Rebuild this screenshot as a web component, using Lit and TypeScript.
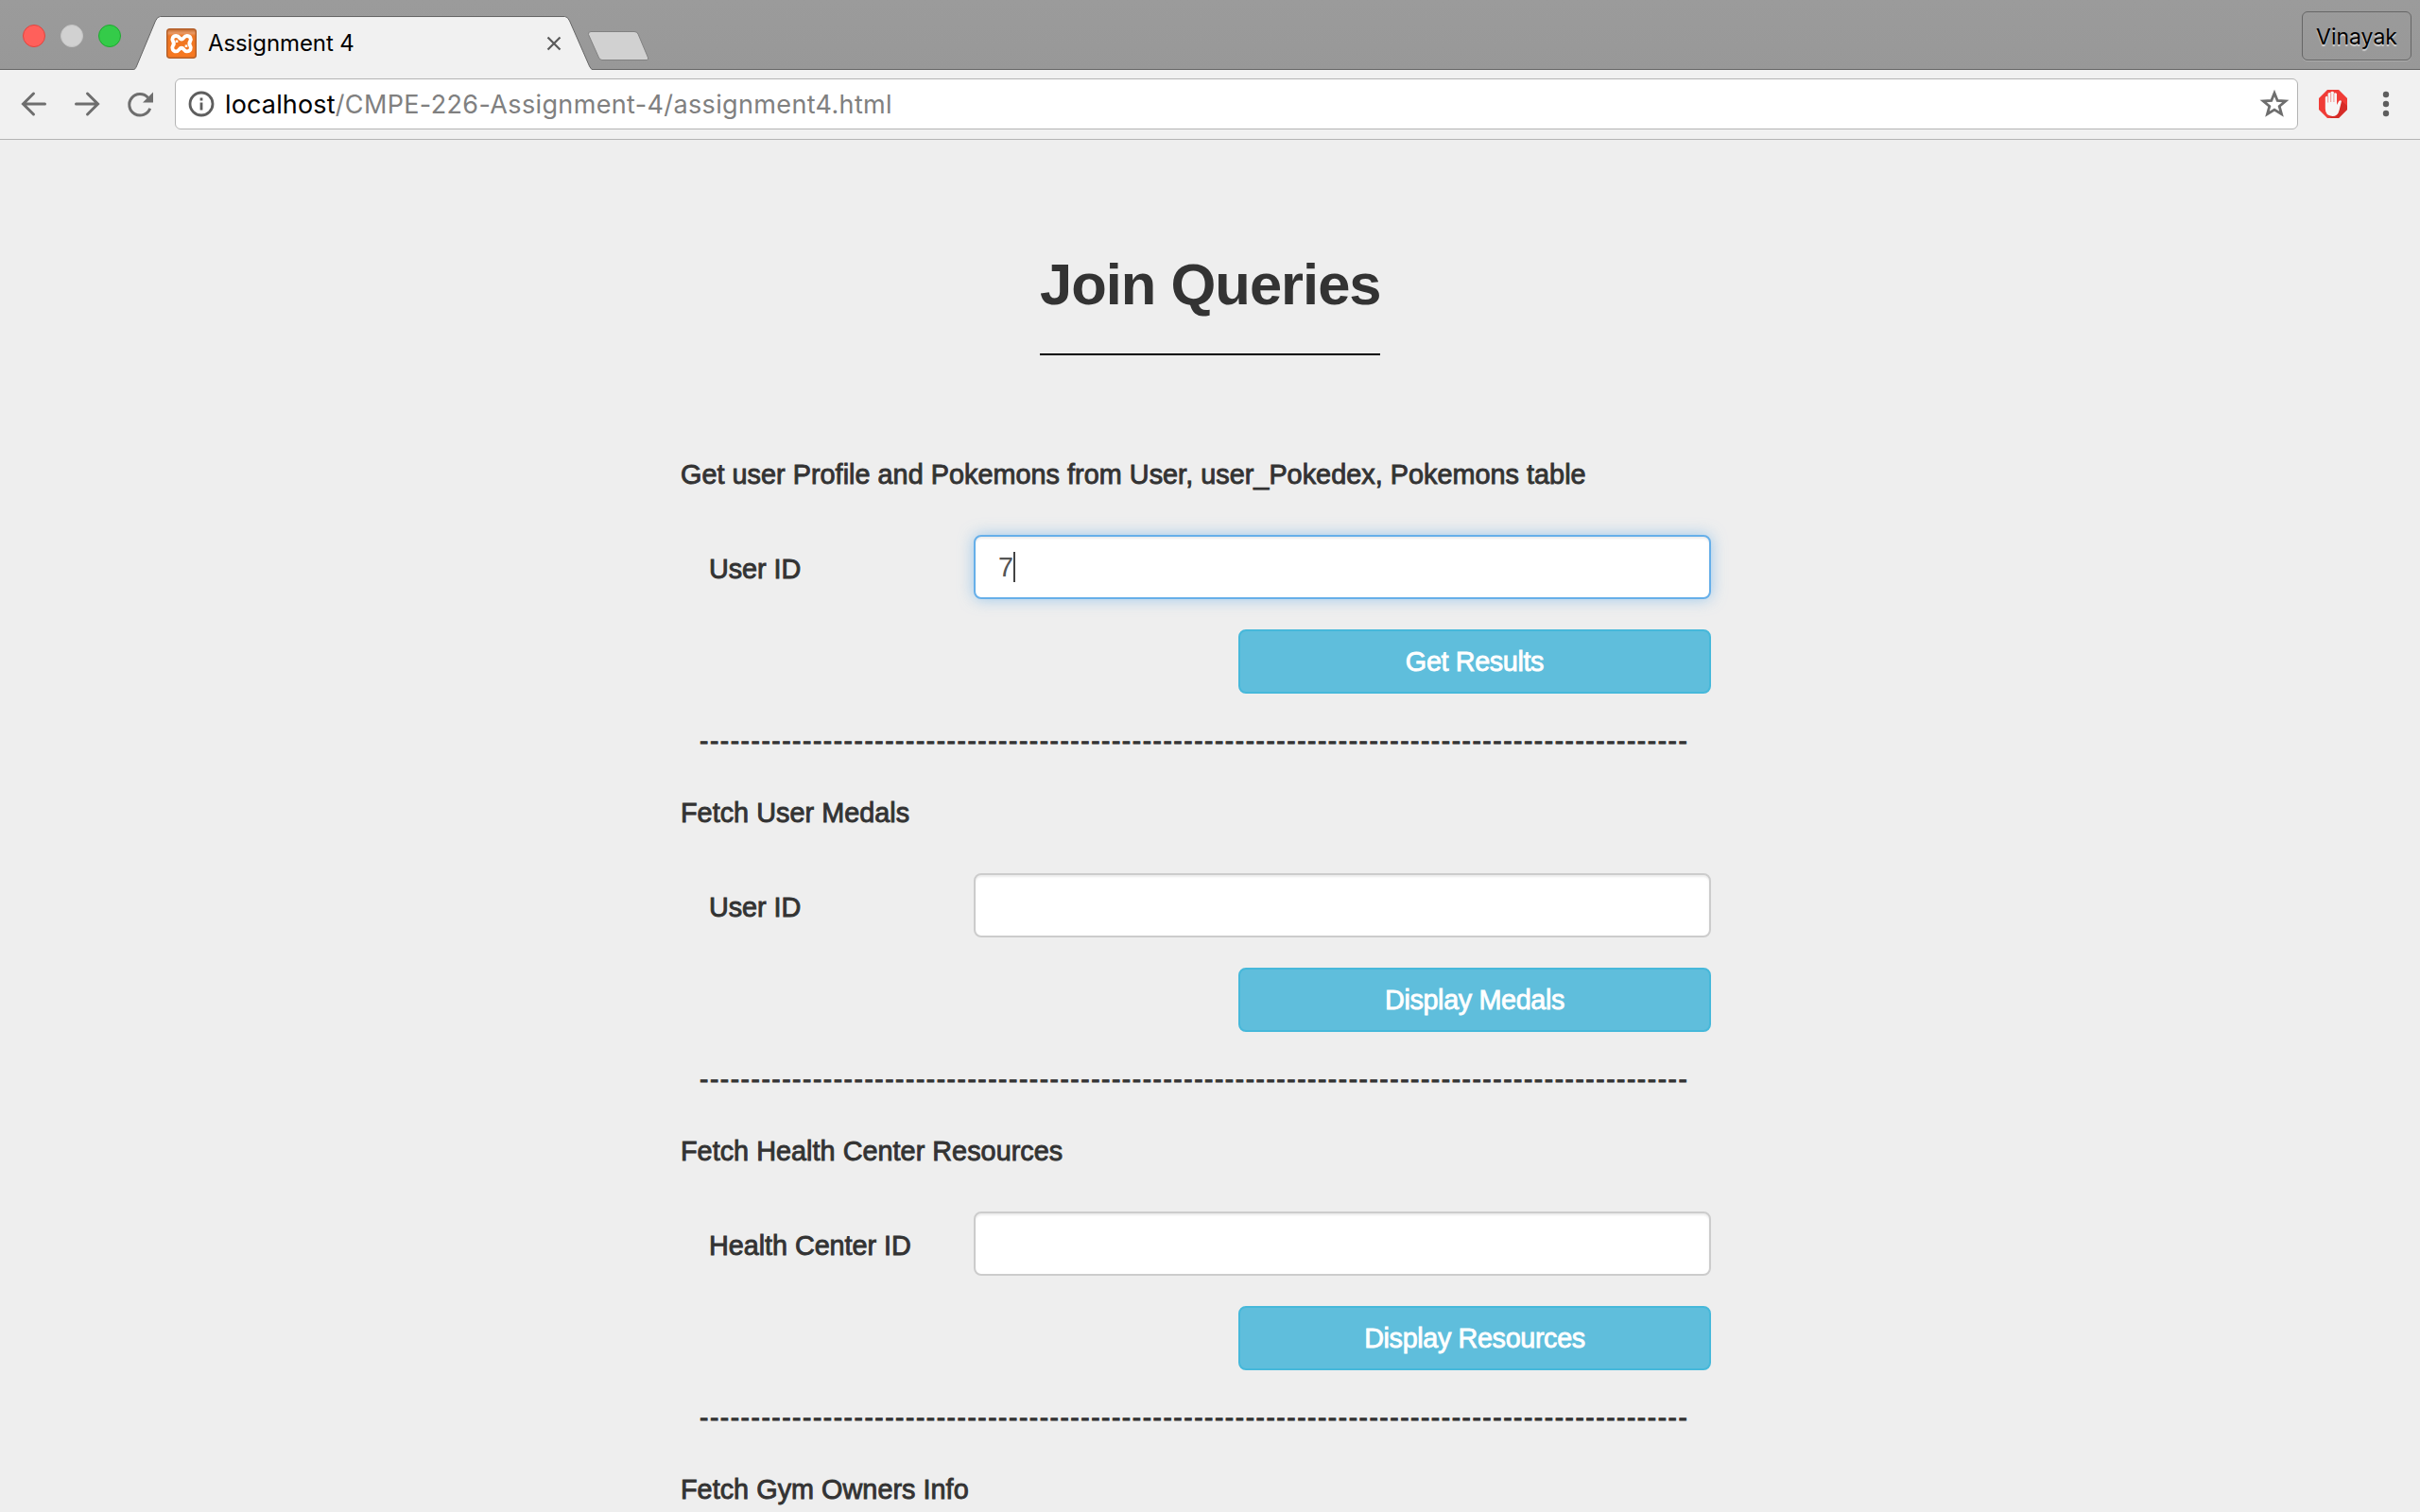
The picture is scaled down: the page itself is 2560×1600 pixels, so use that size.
import { LitElement, html, css, svg } from "lit";
import { customElement, property } from "lit/decorators.js";

interface QueryForm {
  title: string;
  label: string;
  value: string;
  action: string;
  focused?: boolean;
}

const FORMS: QueryForm[] = [
  {
    title: "Get user Profile and Pokemons from User, user_Pokedex, Pokemons table",
    label: "User ID",
    value: "7",
    action: "Get Results",
    focused: true,
  },
  { title: "Fetch User Medals", label: "User ID", value: "", action: "Display Medals" },
  {
    title: "Fetch Health Center Resources",
    label: "Health Center ID",
    value: "",
    action: "Display Resources",
  },
];

const DIVIDER = "-".repeat(96);

const favicon = svg`
  <defs>
    <linearGradient id="fav" x1="0" y1="0" x2="0" y2="1">
      <stop offset="0" stop-color="#c4692c"/><stop offset=".14" stop-color="#e99a66"/>
      <stop offset=".24" stop-color="#ee7623"/><stop offset="1" stop-color="#f87820"/>
    </linearGradient>
  </defs>
  <rect x=".75" y=".75" width="30.5" height="30.5" rx="3" fill="url(#fav)" stroke="#b4602a" stroke-width="1.5"/>
  <path d="M16 11.6C14 11.6 14 8 10.2 8C6.800 8 5.600 11.400 7 13.600C8 15.200 8.400 16.600 7 18.300C5.200 21 7 24.400 10.200 24.400C13.600 24.400 13.400 20.800 16 20.800C18.600 20.800 18.600 24.400 21.800 24.400C25.400 24.400 26.800 21 25.200 18.500C24 16.800 24 15.400 25.200 13.600C26.600 11 25.200 8 21.800 8C18.200 8 18.400 11.600 16 11.600"
    fill="none" stroke="#fff" stroke-width="3.900"/>
  <path d="M11 12.500v2.500M21 17.500v2.500" stroke="#fff" stroke-width="2.600"/>`;

@customElement("browser-bar")
class BrowserBar extends LitElement {
  static styles = css`
    :host {
      display: block;
      font-family: Inter, "Liberation Sans", sans-serif;
    }
    svg {
      display: block;
      flex: none;
    }
    .tabs {
      display: flex;
      height: 74px;
      box-sizing: border-box;
      border-bottom: 1px solid #666;
      background: linear-gradient(#9b9b9b, #989898);
    }
    .lights {
      display: flex;
      gap: 16px;
      padding: 26px 0 0 24px;
      width: 120px;
    }
    .light {
      box-sizing: border-box;
      width: 24px;
      height: 24px;
      border-radius: 50%;
      border: 1px solid #e0443e;
      background: #ff605b;
    }
    .light.idle {
      border-color: #c4c4c4;
      background: #d1d1d1;
    }
    .light.zoom {
      border-color: #1fa930;
      background: #34cb49;
    }
    .tab {
      position: relative;
      width: 486px;
      height: 74px;
    }
    .tab-shape {
      position: absolute;
      left: -24px;
      top: 0;
    }
    .tab-row {
      position: relative;
      display: flex;
      align-items: center;
      height: 58px;
      padding: 17px 0 0 32px;
    }
    .tab-title {
      flex: 1;
      margin-left: 12px;
      font-size: 24px;
      line-height: 30px;
      letter-spacing: -0.1px;
      color: #000;
    }
    .tab-row .close {
      margin-right: 36px;
    }
    .new-tab {
      margin: 32px 0 0 -9px;
    }
    .profile {
      box-sizing: border-box;
      margin: 12px 9px 0 auto;
      width: 116px;
      height: 52px;
      border: 1px solid #666;
      border-radius: 6px;
      box-shadow: 0 1px 0 #adadad;
      text-align: center;
      font-size: 23px;
      line-height: 53px;
      color: #000;
      text-shadow: 0 2px 1px rgba(255, 255, 255, 0.6);
      white-space: nowrap;
    }
    .toolbar {
      display: flex;
      align-items: center;
      height: 74px;
      box-sizing: border-box;
      padding-bottom: 1px;
      border-bottom: 1px solid #b4b4b4;
      background: #f1f1f1;
    }
    .omnibox {
      display: flex;
      align-items: center;
      box-sizing: border-box;
      width: 2246px;
      height: 54px;
      margin-left: 21px;
      padding: 0 8px 0 13px;
      border: 1px solid #b4b4b4;
      border-radius: 6px;
      background: #fff;
    }
    .url {
      flex: 1;
      margin-left: 11px;
      padding-top: 1px;
      font-size: 27px;
      line-height: 34px;
      letter-spacing: 0.36px;
      color: #808080;
      white-space: nowrap;
    }
    .host {
      letter-spacing: 0.15px;
      color: #000;
    }
    .nav {
      display: flex;
      margin-left: 20px;
      gap: 24px;
    }
    .block {
      margin-left: 21px;
    }
    .menu {
      margin-left: 33px;
    }
  `;

  render() {
    return html`
      <div class="tabs">
        <div class="lights">
          <div class="light"></div>
          <div class="light idle"></div>
          <div class="light zoom"></div>
        </div>
        <div class="tab">
          <svg class="tab-shape" width="510" height="74" viewBox="0 0 510 74">
            <path d="M21 74C24.500 74 25 72 26 70L46 22Q48 17.500 51 17.500H479Q482 17.500 484 22L505 70Q506.500 73.500 509 74" transform="translate(-1.500)" fill="#f1f1f1" stroke="#666" />
          </svg>
          <div class="tab-row">
            <svg width="32" height="32" viewBox="0 0 32 32">${favicon}</svg>
            <div class="tab-title">Assignment 4</div>
            <svg class="close" width="16" height="16" viewBox="0 0 16 16">
              <path d="M1.500 1.500l13 13M14.500 1.500l-13 13" stroke="#5a5a5a" stroke-width="2.200" />
            </svg>
          </div>
        </div>
        <svg class="new-tab" width="68" height="34" viewBox="0 0 68 34">
          <path d="M4 1.500H50Q53 1.500 54 4L64.500 29Q65.500 31.500 63 31.500H16Q13.500 31.500 12.500 29L1.500 4.500Q1 1.500 4 1.500Z" fill="#d1d1d1" stroke="#818181" />
        </svg>
        <div class="profile">Vinayak</div>
      </div>
      <div class="toolbar">
        <div class="nav">
          <svg width="32" height="32" viewBox="0 0 32 32" fill="none" stroke="#6e6e6e" stroke-width="3" stroke-linecap="round">
            <path d="M27.500 16H5M15.500 5L4.500 16L15.500 27" />
          </svg>
          <svg width="32" height="32" viewBox="0 0 32 32" fill="none" stroke="#6e6e6e" stroke-width="3" stroke-linecap="round">
            <path d="M4.500 16H27M16.500 5L27.500 16L16.500 27" />
          </svg>
          <svg width="32" height="32" viewBox="0 0 32 32">
            <path d="M24.500 9.200A11.300 11.300 0 1 0 26.700 20.700" fill="none" stroke="#6e6e6e" stroke-width="3" />
            <path d="M30 3.500V14.500H19Z" fill="#6e6e6e" />
          </svg>
        </div>
        <div class="omnibox">
          <svg width="28" height="28" viewBox="0 0 28 28">
            <circle cx="14" cy="14" r="12" fill="none" stroke="#5e5e5e" stroke-width="2.800" />
            <path d="M14 7.500v3M14 12.500v8" stroke="#5e5e5e" stroke-width="2.800" />
          </svg>
          <div class="url"><span class="host">localhost</span>/CMPE-226-Assignment-4/assignment4.html</div>
          <svg width="32" height="32" viewBox="0 0 32 32">
            <path d="M16 4.500L19.200 12.500L27.800 13L21.200 18.500L23.500 26.700L16 22.100L8.500 26.700L10.800 18.500L4.200 13L12.800 12.500Z" fill="none" stroke="#6e6e6e" stroke-width="2.800" />
          </svg>
        </div>
        <svg class="block" width="32" height="32" viewBox="0 0 32 32">
          <path d="M10 1h12l9 9v12l-9 9H10l-9-9V10Z" fill="#f03c37" />
          <path d="M25 12.500L31 18V22L22 31H14L10 27Z" fill="#c5221e" opacity=".6" />
          <path d="M7.800 9Q9.300 7 10.600 8.500V5Q12 3.200 13.500 4.500V3.600Q15.200 1.800 16.900 3.600V5Q18.500 3.500 20 5.200V17L22.200 13Q23.800 11.600 25 13L22.500 23Q21 29 15.400 29Q7.800 28.500 7.800 21Z" fill="#f6f6f6" />
          <path d="M10.700 8V14.500M13.700 4.500V14M16.900 5V14" stroke="#ef8a86" stroke-width=".9" />
        </svg>
        <svg class="menu" width="16" height="32" viewBox="0 0 16 32" fill="#5e5e5e">
          <circle cx="7" cy="6" r="3.200" /><circle cx="7" cy="16" r="3.200" /><circle cx="7" cy="26" r="3.200" />
        </svg>
      </div>
    `;
  }
}

@customElement("query-form")
class QueryFormElement extends LitElement {
  @property({ attribute: false }) form!: QueryForm;

  static styles = css`
    :host {
      display: block;
      height: 358px;
      color: #333;
      font-size: 28px;
      line-height: 40px;
    }
    .title,
    .label,
    .divider {
      -webkit-text-stroke: 0.9px #333;
      white-space: nowrap;
    }
    .title {
      height: 41px;
      font-size: 28.8px;
      letter-spacing: 0.03px;
    }
    .row {
      display: flex;
      align-items: center;
      margin-top: 43px;
      padding-left: 30px;
    }
    .label {
      width: 280px;
      padding-top: 4px;
      font-size: 28.8px;
      letter-spacing: -0.05px;
    }
    .field {
      position: relative;
      width: 780px;
      height: 68px;
    }
    .input {
      display: block;
      box-sizing: border-box;
      width: 100%;
      height: 100%;
      padding: 12px 24px;
      border: 2px solid #ccc;
      border-radius: 8px;
      outline: none;
      background: #fff;
      box-shadow: inset 0 2px 2px rgba(0, 0, 0, 0.075);
      color: #555;
      font: 28.8px/40px "Liberation Sans", Arial, sans-serif;
    }
    .input.focused {
      border-color: #66afe9;
      box-shadow: inset 0 2px 2px rgba(0, 0, 0, 0.075), 0 0 16px rgba(102, 175, 233, 0.6);
    }
    .caret {
      position: absolute;
      left: 42px;
      top: 18px;
      width: 2px;
      height: 32px;
      background: #444;
    }
    .button {
      display: block;
      box-sizing: border-box;
      width: 500px;
      height: 68px;
      margin: 32px 0 0 auto;
      padding: 0;
      border: 2px solid #46b8da;
      border-radius: 8px;
      background: #5fbedc;
      color: #fff;
      font: 28.8px/40px "Liberation Sans", Arial, sans-serif;
      letter-spacing: -0.38px;
      -webkit-text-stroke: 0.8px #fff;
    }
    .divider {
      margin: 30px 0 0 20px;
      letter-spacing: 1.575px;
    }
  `;

  render() {
    const { title, label, value, action, focused } = this.form;
    return html`
      <div class="title">${title}</div>
      <div class="row">
        <div class="label">${label}</div>
        <div class="field">
          <input class="input ${focused ? "focused" : ""}" type="text" .value=${value} />
          ${focused ? html`<div class="caret"></div>` : ""}
        </div>
      </div>
      <button class="button">${action}</button>
      <div class="divider">${DIVIDER}</div>
    `;
  }
}

@customElement("app-root")
class AppRoot extends LitElement {
  static styles = css`
    :host {
      display: block;
      width: 2560px;
      height: 1600px;
      overflow: hidden;
      background: #eee;
      font-family: "Liberation Sans", Arial, sans-serif;
    }
    .page {
      display: flex;
      flex-direction: column;
      align-items: center;
      padding-top: 120px;
    }
    .heading {
      box-sizing: border-box;
      width: 360px;
      margin: 0 0 106px;
      padding: 0 0 40px;
      border-bottom: 2px solid #000;
      color: #333;
      font-size: 61.5px;
      font-weight: 700;
      line-height: 66px;
      letter-spacing: -1px;
      white-space: nowrap;
    }
    .forms {
      width: 1090px;
      margin-right: 30px;
    }
    .next {
      color: #333;
      font-size: 28.8px;
      line-height: 40px;
      letter-spacing: 0.03px;
      -webkit-text-stroke: 0.9px #333;
    }
  `;

  render() {
    return html`
      <browser-bar></browser-bar>
      <div class="page">
        <h1 class="heading">Join Queries</h1>
        <div class="forms">
          ${FORMS.map((form) => html`<query-form .form=${form}></query-form>`)}
          <div class="next">Fetch Gym Owners Info</div>
        </div>
      </div>
    `;
  }
}
